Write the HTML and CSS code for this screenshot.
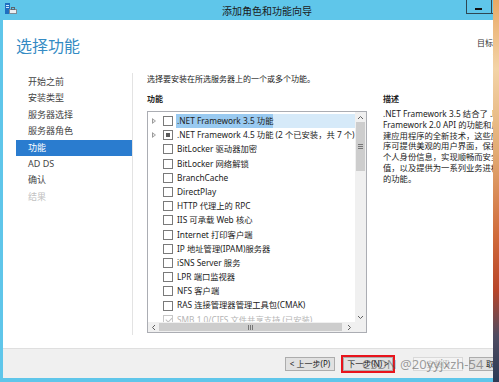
FILE: index.html
```html
<!DOCTYPE html>
<html lang="zh-CN">

<head>
    <meta charset="UTF-8">
    <title>添加角色和功能向导</title>
    <link rel="stylesheet" href="styles.css">
</head>

<body>
    <div class="screen">
        <div class="window">
            <div class="titlebar">
                <svg class="app-icon" width="12" height="12" viewBox="0 0 12 12">
                    <rect x="0" y="0" width="5" height="11" fill="#1f6fc0"/>
                    <rect x="1" y="2" width="3" height="1" fill="#cfe6fb"/>
                    <rect x="1" y="4" width="3" height="1" fill="#cfe6fb"/>
                    <rect x="4" y="6" width="8" height="5" fill="#7d8a94"/>
                    <rect x="5" y="7" width="6" height="3" fill="#e9eef2"/>
                    <rect x="6.5" y="4.5" width="3" height="2" fill="none" stroke="#5b6770" stroke-width="1"/>
                </svg>
                <span class="title">添加角色和功能向导</span>
                <div class="win-buttons">
                    <span class="wbtn wbtn-min"></span>
                    <span class="wbtn wbtn-max"></span>
                </div>
            </div>

            <div class="frame">
                <div class="client">
                    <div class="header">
                        <h1>选择功能</h1>
                        <div class="target">目标服务器<br>Server</div>
                    </div>

                    <div class="main">
                        <ul class="steps">
                            <li>开始之前</li>
                            <li>安装类型</li>
                            <li>服务器选择</li>
                            <li>服务器角色</li>
                            <li class="active">功能</li>
                            <li>AD DS</li>
                            <li>确认</li>
                            <li class="disabled">结果</li>
                        </ul>

                        <div class="page">
                            <p class="intro">选择要安装在所选服务器上的一个或多个功能。</p>
                            <div class="columns">
                                <div class="features">
                                    <h2>功能</h2>
                                    <div class="listbox">
                                        <div class="rows">
                                            <div class="row selected">
                                                <span class="expander"></span><span class="check"></span>
                                                <span class="label"><span class="hl">.NET Framework 3.5 功能</span></span>
                                            </div>
                                            <div class="row">
                                                <span class="expander"></span><span class="check partial"></span>
                                                <span class="label">.NET Framework 4.5 功能 (2 个已安装，共 7 个)</span>
                                            </div>
                                            <div class="row"><span class="nox"></span><span class="check"></span><span class="label">BitLocker 驱动器加密</span></div>
                                            <div class="row"><span class="nox"></span><span class="check"></span><span class="label">BitLocker 网络解锁</span></div>
                                            <div class="row"><span class="nox"></span><span class="check"></span><span class="label">BranchCache</span></div>
                                            <div class="row"><span class="nox"></span><span class="check"></span><span class="label">DirectPlay</span></div>
                                            <div class="row"><span class="nox"></span><span class="check"></span><span class="label">HTTP 代理上的 RPC</span></div>
                                            <div class="row"><span class="nox"></span><span class="check"></span><span class="label">IIS 可承载 Web 核心</span></div>
                                            <div class="row"><span class="nox"></span><span class="check"></span><span class="label">Internet 打印客户端</span></div>
                                            <div class="row"><span class="nox"></span><span class="check"></span><span class="label">IP 地址管理(IPAM)服务器</span></div>
                                            <div class="row"><span class="nox"></span><span class="check"></span><span class="label">iSNS Server 服务</span></div>
                                            <div class="row"><span class="nox"></span><span class="check"></span><span class="label">LPR 端口监视器</span></div>
                                            <div class="row"><span class="nox"></span><span class="check"></span><span class="label">NFS 客户端</span></div>
                                            <div class="row"><span class="nox"></span><span class="check"></span><span class="label">RAS 连接管理器管理工具包(CMAK)</span></div>
                                            <div class="row installed"><span class="nox"></span><span class="check checked"></span><span class="label">SMB 1.0/CIFS 文件共享支持 (已安装)</span></div>
                                        </div>
                                        <div class="vscroll">
                                            <span class="sarrow">
                                                <svg width="7" height="5" viewBox="0 0 7 5"><path d="M1 4 L3.5 1.5 L6 4" fill="none" stroke="#606060"/></svg>
                                            </span>
                                            <span class="vthumb"><i></i><i></i><i></i></span>
                                            <span class="vtrack"></span>
                                            <span class="sarrow">
                                                <svg width="7" height="5" viewBox="0 0 7 5"><path d="M1 1 L3.5 3.5 L6 1" fill="none" stroke="#606060"/></svg>
                                            </span>
                                        </div>
                                        <div class="hscroll">
                                            <span class="sarrow">
                                                <svg width="5" height="7" viewBox="0 0 5 7"><path d="M4 1 L1.5 3.5 L4 6" fill="none" stroke="#606060"/></svg>
                                            </span>
                                            <span class="hthumb"><i></i><i></i><i></i></span>
                                            <span class="sarrow sarrow-wide">
                                                <svg width="5" height="7" viewBox="0 0 5 7"><path d="M1 1 L3.5 3.5 L1 6" fill="none" stroke="#606060"/></svg>
                                            </span>
                                        </div>
                                        <div class="corner"></div>
                                    </div>
                                </div>

                                <div class="desc">
                                    <h2>描述</h2>
                                    <p>.NET Framework 3.5 结合了 .NET<br>Framework 2.0 API 的功能和用于构<br>建应用程序的全新技术，这些应用程<br>序可提供美观的用户界面，保护客户<br>个人身份信息，实现顺畅而安全的通<br>值，以及提供为一系列业务进程建模<br>的功能。</p>
                                </div>
                            </div>
                        </div>
                    </div>

                    <div class="footer">
                        <button class="btn">&lt; 上一步(P)</button>
                        <button class="btn btn-marked">下一步(N) &gt;</button>
                        <button class="btn btn-disabled">安装(I)</button>
                        <button class="btn btn-cancel">取消</button>
                        <span class="watermark">CSDN @20yyjxzh-54</span>
                    </div>
                </div>
            </div>
        </div>
        <div class="desktop"></div>
    </div>
</body>

</html>
```

FILE: styles.css
```css
body {
    margin: 0;
    font-family: 'Noto Sans', 'Noto Sans CJK SC', sans-serif;
    color: #222;
    overflow: hidden;
}

.screen {
    display: flex;
    width: 499px;
    height: 382px;
    overflow: hidden;
}

.window {
    width: 493px;
    flex: none;
    overflow: hidden;
    background-color: #5fc6ea;
}

.desktop {
    flex: 1;
    background: linear-gradient(to bottom, #e9a865 0%, #f3d3a6 18%, #e2ab72 40%, #d06a3a 62%, #b8452a 76%, #4e4c62 88%, #2c3a55 100%);
}

/* title bar */
.titlebar {
    position: relative;
    display: flex;
    align-items: center;
    width: 540px;
    height: 20px;
}

.app-icon {
    margin-left: 5px;
    margin-top: -2px;
}

.title {
    margin-left: 205px;
    font-size: 10px;
    color: #1a1a1a;
}

.win-buttons {
    position: absolute;
    top: 0;
    left: 466px;
    display: flex;
}

.wbtn {
    position: relative;
    width: 24px;
    height: 13px;
    border: 1px solid #2e4753;
    border-top: none;
    margin-right: -1px;
}

.wbtn-min::after {
    content: "";
    position: absolute;
    left: 8px;
    top: 8px;
    width: 7px;
    height: 2px;
    background-color: #111;
}

.wbtn-max::after {
    content: "";
    position: absolute;
    left: 1px;
    top: 4px;
    width: 6px;
    height: 5px;
    border: 1px solid #111;
    border-top-width: 2px;
}

/* frame and client */
.frame {
    padding: 0 0 4px 3px;
}

.client {
    width: 540px;
    height: 358px;
    background-color: #fff;
    display: flex;
    flex-direction: column;
}

.header {
    display: flex;
    justify-content: space-between;
    height: 53px;
    padding: 0 26px 0 13px;
}

h1 {
    margin: 16px 0 0;
    font-size: 16px;
    line-height: 21px;
    font-weight: normal;
    color: #348bc4;
}

.target {
    margin-top: 18px;
    font-size: 8px;
    line-height: 9px;
    text-align: right;
    color: #333;
}

.main {
    display: flex;
    height: 262px;
}

.steps {
    list-style: none;
    margin: 0 0 0 13px;
    padding: 1px 0 0;
    width: 116px;
    border-right: 1px solid #e3e3e3;
}

.steps li {
    height: 16.4px;
    line-height: 16.4px;
    padding-left: 12px;
    font-size: 9px;
    color: #444;
}

.steps li.active {
    background-color: #2a7ccf;
    color: #fff;
}

.steps li.disabled {
    color: #c2c2c2;
}

.page {
    margin-left: 14px;
}

.intro {
    margin: 0;
    font-size: 8px;
    line-height: 12px;
}

.columns {
    display: flex;
}

h2 {
    margin: 8px 0 6px;
    font-size: 8px;
    line-height: 12px;
    font-weight: bold;
}

.features {
    width: 220px;
    flex: none;
}

/* list box */
.listbox {
    display: grid;
    grid-template-columns: 1fr 11px;
    grid-template-rows: 1fr 10px;
    height: 222px;
    box-sizing: border-box;
    border: 1px solid #abadb3;
}

.rows {
    overflow: hidden;
    padding-top: 2px;
}

.row {
    display: flex;
    align-items: center;
    height: 14.2px;
    font-size: 8.3px;
    white-space: nowrap;
}

.expander,
.nox {
    width: 10px;
    height: 100%;
    margin-left: 2px;
    flex: none;
    position: relative;
}

.expander::before {
    content: "";
    position: absolute;
    left: 2px;
    top: 4px;
    border-style: solid;
    border-width: 3px 0 3px 4px;
    border-color: transparent transparent transparent #9a9a9a;
}

.expander::after {
    content: "";
    position: absolute;
    left: 3px;
    top: 5.5px;
    border-style: solid;
    border-width: 1.5px 0 1.5px 2px;
    border-color: transparent transparent transparent #fff;
}

.check {
    position: relative;
    width: 10px;
    height: 10px;
    box-sizing: border-box;
    border: 1px solid #7a7a7a;
    margin-left: 3px;
    flex: none;
}

.check.partial::after {
    content: "";
    position: absolute;
    left: 2px;
    top: 2px;
    width: 4px;
    height: 4px;
    background-color: #5a5a5a;
}

.check.checked {
    border-color: #c8c8c8;
}

.check.checked::after {
    content: "";
    position: absolute;
    left: 2.5px;
    top: 0.5px;
    width: 2.5px;
    height: 5px;
    border: solid #c0c0c0;
    border-width: 0 1px 1px 0;
    transform: rotate(45deg);
}

.label {
    flex: 1;
    height: 100%;
    line-height: 14.2px;
    margin-left: 3px;
    padding-left: 1px;
}

.row.selected .label {
    background-color: #d6eaf9;
}

.hl {
    display: inline-block;
    background-color: #99caf1;
    margin-left: -1px;
    padding-left: 1px;
}

.row.installed {
    color: #b5b5b5;
}

/* scroll bars */
.vscroll {
    display: flex;
    flex-direction: column;
    background-color: #f0f0f0;
}

.sarrow {
    display: flex;
    align-items: center;
    justify-content: center;
    flex: none;
    width: 11px;
    height: 10px;
}

.vthumb,
.hthumb {
    display: flex;
    align-items: center;
    justify-content: center;
    gap: 1px;
    background-color: #cdcdcd;
    flex: none;
}

.vthumb {
    flex-direction: column;
    height: 49px;
    margin: 0 1px;
}

.vthumb i {
    width: 5px;
    height: 1px;
    background-color: #777;
}

.vtrack {
    flex: 1;
}

.hscroll {
    display: flex;
    background-color: #f0f0f0;
}

.hscroll .sarrow {
    width: 10px;
}

.hscroll .sarrow-wide {
    width: 12px;
    margin-left: 1px;
}

.hthumb {
    width: 183px;
    margin: 1px 0 1px 1px;
}

.hthumb i {
    width: 1px;
    height: 5px;
    background-color: #777;
}

.corner {
    background-color: #f0f0f0;
}

/* description */
.desc {
    margin-left: 16px;
    width: 140px;
    flex: none;
}

.desc h2 {
    margin-bottom: 4px;
}

.desc p {
    margin: 0;
    font-size: 8.3px;
    line-height: 10.8px;
    white-space: nowrap;
}

/* footer */
.footer {
    position: relative;
    display: flex;
    align-items: center;
    margin-top: 13px;
    height: 29px;
    padding-left: 282px;
    background-color: #f0f0f0;
    border-top: 1px solid #dfdfdf;
}

.btn {
    width: 50px;
    height: 14px;
    padding: 0;
    border: 1px solid #acacac;
    background-color: #e1e1e1;
    font-family: 'Noto Sans', 'Noto Sans CJK SC', sans-serif;
    font-size: 8px;
    line-height: 12px;
    color: #222;
}

.btn-marked {
    margin-left: 8px;
    outline: 2px solid #e8141c;
}

.btn-disabled {
    margin-left: 20px;
    background-color: #f4f4f4;
    border-color: #d9d9d9;
    color: #bdbdbd;
}

.btn-cancel {
    margin-left: 6px;
}

.watermark {
    position: absolute;
    left: 359px;
    top: 6px;
    font-size: 13px;
    line-height: 18px;
    color: rgba(80, 80, 80, 0.55);
    white-space: nowrap;
}
```
